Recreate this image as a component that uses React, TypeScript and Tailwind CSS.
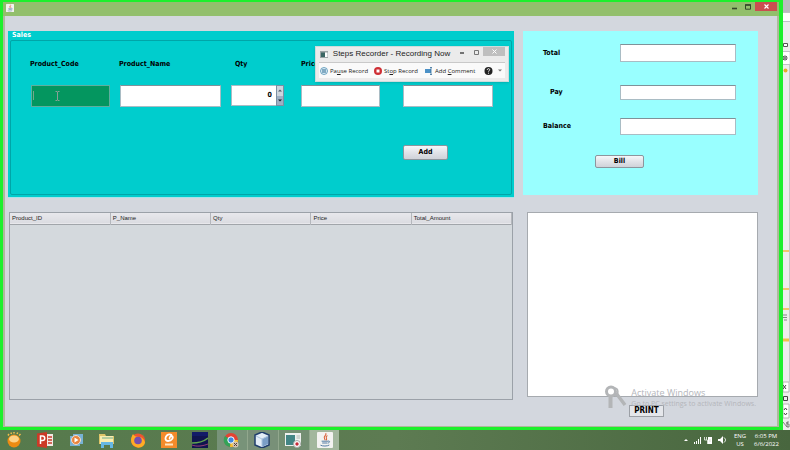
import type { ReactNode } from "react";
import { useState } from "react";

const swing = "font-['DejaVu_Sans_Condensed','DejaVu_Sans',sans-serif]";
const fieldBase = "block w-full border px-1 text-[8px] leading-none outline-none";
const field = `${fieldBase} border-[#a9bcc4] border-t-[#7f9299] bg-white`;
const swingButton =
  "rounded-[2px] border border-[#8d959d] bg-linear-to-b from-[#f6f7f9] via-[#e1e3e8] to-[#cfd2d9] text-[7px] leading-none font-bold text-black";

function JavaCup({ size }: { size: number }) {
  return (
    <svg width={size} height={size} viewBox="0 0 16 16" aria-hidden="true">
      <rect width="16" height="16" rx="1" fill="#f3f3f1" />
      <path d="M8.7 1.2c1.7 2-2.8 2.9-1.2 5.2.5.8.7 1.1.3 1.9M10.4 3.5c-2.3 1.3-1 2.3-.8 3.2.2.6-.2 1.2-.7 1.5" stroke="#d9633b" strokeWidth="1.1" fill="none" />
      <path d="M4.6 9.2h6.4M5.2 11h5.1M11 9.1c2.3-.6 2 1.7-.3 2M3.5 13.2c2 1.2 7 1.1 8.8-.2" stroke="#557da5" strokeWidth="1" fill="none" />
    </svg>
  );
}

function TitleBar() {
  return (
    <header className="flex h-[14px] items-start justify-between bg-[#92bf6c] pl-[3px] pr-[2px]">
      <div className="pt-[2px]">
        <JavaCup size={8} />
      </div>
      <div className="flex h-[9px]">
        <button aria-label="Minimize" className="flex w-[13px] items-center justify-center">
          <svg width="5" height="7" viewBox="0 0 5 7"><path d="M0 5.5h5" stroke="#33482a" strokeWidth="1.6" /></svg>
        </button>
        <button aria-label="Maximize" className="flex w-[14px] items-center justify-center">
          <svg width="6" height="6" viewBox="0 0 6 6"><path d="M.5.9h5v4.3h-5z" fill="none" stroke="#33482a" /><path d="M0 1h6" stroke="#33482a" strokeWidth="1.5" /></svg>
        </button>
        <button aria-label="Close" className="flex w-[22px] items-center justify-center bg-[#c94f50]">
          <svg width="5" height="5" viewBox="0 0 5 5"><path d="m.5.5 4 4m0-4-4 4" stroke="#fff" strokeWidth="1.1" /></svg>
        </button>
      </div>
    </header>
  );
}

function Entry({ id, label, children, inset }: { id: string; label: string; children: ReactNode; inset?: string }) {
  return (
    <div className="flex min-w-0 flex-col gap-[16px]">
      <label htmlFor={id} className={`h-[10px] text-[7px] leading-[10px] font-bold whitespace-nowrap ${inset ?? ""}`}>
        {label}
      </label>
      {children}
    </div>
  );
}

function SalesPanel() {
  const [qty, setQty] = useState(0);
  return (
    <section className="h-[167px] border-b border-[#a8e3e8] bg-[#00cdcd] px-[2px] pb-[2px]">
      <h1 className="h-[9px] pl-[2px] text-[7px] leading-[9px] font-bold text-white">Sales</h1>
      <div className="h-[155px] rounded-[2px] border border-[#00a5a8] pr-[18px] pl-[20px] pt-[18px]">
        <div className="grid grid-cols-[minmax(0,89fr)_minmax(0,111fr)_minmax(0,70fr)_minmax(0,102fr)_minmax(0,90fr)]">
          <Entry id="code" label="Product_Code" inset="-ml-px">
            <div className="relative mr-[10px]">
              <input id="code" className={`${fieldBase} h-[22px] border-[#5fae9e] bg-[#04965f]`} />
              <svg className="pointer-events-none absolute top-[6px] left-[2px]" width="30" height="11" viewBox="0 0 30 11" aria-hidden="true">
                <path d="M.5 0v9" stroke="#75a88b" />
                <path d="M22.500.5h1.500l.5.500.5-.500h1.500M24.500 1v8M22.500 9.500h1.500l.5-.500.5.500h1.500" stroke="#8a9f96" fill="none" />
              </svg>
            </div>
          </Entry>
          <Entry id="name" label="Product_Name" inset="-ml-px">
            <div className="mr-[10px]">
              <input id="name" className={`${field} h-[22px]`} />
            </div>
          </Entry>
          <Entry id="qty" label="Qty" inset="pl-[4px]">
            <div className="mr-[17px] flex h-[21px]">
              <input
                id="qty"
                value={qty}
                onChange={(e) => setQty(Number(e.target.value) || 0)}
                className="min-w-0 flex-1 border border-r-0 border-[#a9bcc4] bg-white pr-[4px] text-right text-[7px] font-bold outline-none"
              />
              <div className="flex w-[8px] flex-col border border-[#7a8fa4]">
                <button aria-label="Increase quantity" onClick={() => setQty(qty + 1)} className="flex flex-1 items-center justify-center bg-[#ccd4dd]">
                  <svg width="4" height="3" viewBox="0 0 4 3"><path d="m0 2.500 2-2 2 2z" fill="#4e5b68" /></svg>
                </button>
                <button aria-label="Decrease quantity" onClick={() => setQty(qty - 1)} className="flex flex-1 items-center justify-center bg-[#9eafc3]">
                  <svg width="4" height="3" viewBox="0 0 4 3"><path d="m0 .5 2 2 2-2z" fill="#14202c" /></svg>
                </button>
              </div>
            </div>
          </Entry>
          <Entry id="price" label="Price">
            <div className="mr-[23px]">
              <input id="price" className={`${field} h-[22px]`} />
            </div>
          </Entry>
          <Entry id="amount" label="">
            <input id="amount" aria-label="Amount" className={`${field} h-[22px]`} />
          </Entry>
          <div className="col-start-5 pt-[30px]">
            <button className={`${swingButton} h-[15px] w-[45px]`}>Add</button>
          </div>
        </div>
      </div>
    </section>
  );
}

function BillPanel() {
  return (
    <section className="h-[164px] bg-[#99ffff] pt-[13px] pr-[22px] pl-[20px] text-[7px] font-bold">
      <div className="flex h-[18px] items-center justify-between">
        <label htmlFor="total">Total</label>
        <div className="w-[60%]"><input id="total" className={`${field} h-[18px]`} /></div>
      </div>
      <div className="mt-[23px] flex h-[15px] items-center justify-between">
        <label htmlFor="pay" className="pl-[7px]">Pay</label>
        <div className="w-[60%]"><input id="pay" className={`${field} h-[15px]`} /></div>
      </div>
      <div className="mt-[18px] flex h-[17px] items-center justify-between">
        <label htmlFor="balance">Balance</label>
        <div className="w-[60%]"><input id="balance" className={`${field} h-[17px]`} /></div>
      </div>
      <div className="flex justify-center pt-[20px] pr-[40px]">
        <button className={`${swingButton} h-[13px] w-[49px]`}>Bill</button>
      </div>
    </section>
  );
}

function SalesTable() {
  const columns = ["Product_ID", "P_Name", "Qty", "Price", "Total_Amount"];
  return (
    <div className="mr-px ml-px flex-1 border border-[#9ba1a8] bg-[#d4d9dd]">
      <table className="w-full table-fixed border-collapse font-['Liberation_Sans',sans-serif]">
        <thead>
          <tr className="h-[11px] border-b border-[#a1a5aa] bg-linear-to-b from-[#e8e8ec] to-[#dbdce1]">
            {columns.map((c) => (
              <th key={c} scope="col" className="border-r border-[#b4b7bc] p-0 pl-[2px] text-left text-[6px] leading-[10px] font-normal text-[#222]">
                {c}
              </th>
            ))}
          </tr>
        </thead>
      </table>
    </div>
  );
}

function StepsRecorder() {
  return (
    <div className="absolute top-[46px] left-[315px] w-[194px] border border-[#cddcdc] bg-[#ebebeb] px-[3px] pb-[3px] font-['Open_Sans','Noto_Sans',sans-serif] text-[#222] shadow-sm">
      <div className="flex h-[15px] items-start">
        <svg className="mt-[4px] ml-px" width="8" height="7" viewBox="0 0 8 7" aria-hidden="true">
          <path d="M0 0h8v7H0z" fill="#9ba3a5" /><path d="M1 1.500h4v4.500H1z" fill="#3b6664" /><path d="M5 1.500h2.500V6H5z" fill="#fff" />
        </svg>
        <h2 className="flex-1 pt-px text-center font-['Liberation_Sans',sans-serif] text-[8px] leading-[12px] whitespace-nowrap">Steps Recorder - Recording Now</h2>
        <button aria-label="Minimize recorder" className="flex h-[10px] w-[14px] items-center justify-center">
          <svg width="4" height="4" viewBox="0 0 4 4"><path d="M0 3h4" stroke="#222" strokeWidth="1.200" /></svg>
        </button>
        <button aria-label="Maximize recorder" className="flex h-[10px] w-[14px] items-center justify-center">
          <svg width="5" height="5" viewBox="0 0 5 5"><path d="M.5.5h4v4h-4z" fill="none" stroke="#777" /></svg>
        </button>
        <button aria-label="Close recorder" className="flex h-[9px] w-[22px] items-center justify-center bg-[#bfbfbf]">
          <svg width="5" height="5" viewBox="0 0 5 5"><path d="m.5.5 4 4m0-4-4 4" stroke="#fff" /></svg>
        </button>
      </div>
      <div className="flex h-[16px] items-center border-t border-[#c9c9c9] bg-[#fafafa] pl-px text-[6px] leading-[8px] whitespace-nowrap">
        <button className="flex w-[54px] items-center gap-[2px]">
          <svg width="8" height="8" viewBox="0 0 8 8"><circle cx="4" cy="4" r="3.500" fill="#e3f1f8" stroke="#4c8eb1" strokeWidth=".8" /><path d="M3 2v4M5 2v4" stroke="#23658d" /></svg>
          <span>Pa<u>u</u>se Record</span>
        </button>
        <button className="flex w-[51px] items-center gap-[2px]">
          <svg width="8" height="8" viewBox="0 0 8 8"><circle cx="4" cy="4" r="4" fill="#cf2f35" /><path d="M2.500 2.500h3v3h-3z" fill="#fff" /></svg>
          <span>St<u>o</u>p Record</span>
        </button>
        <button className="flex w-[59px] items-center gap-[2px]">
          <svg width="8" height="8" viewBox="0 0 8 8"><path d="M0 2h6v4H0z" fill="#4b91c7" /><path d="M5 .5h2M6 .5v7M5 7.500h2" stroke="#386e99" strokeWidth=".8" /></svg>
          <span>Add <u>C</u>omment</span>
        </button>
        <button aria-label="Help" className="flex items-center gap-[5px]">
          <svg width="9" height="8" viewBox="0 0 9 8"><circle cx="4.500" cy="4" r="4" fill="#222" /><path d="M3.200 3c0-2 2.800-1.700 2.500 0-.1.600-1.200.8-1.200 1.700M4.500 5.700v1" stroke="#fff" strokeWidth=".9" fill="none" /></svg>
          <svg width="4" height="3" viewBox="0 0 4 3"><path d="M0 .5h4l-2 2z" fill="#777" /></svg>
        </button>
      </div>
    </div>
  );
}

function ActivationNotice() {
  return (
    <div className="pointer-events-none absolute right-[34px] bottom-[39px] flex gap-[4px] font-['Open_Sans','Noto_Sans',sans-serif] text-[#b4b6bb]">
      <svg className="mt-[-2px]" width="23" height="26" viewBox="0 0 23 26" aria-hidden="true">
        <g fill="none" stroke="#b3b5b7">
          <circle cx="7" cy="6.500" r="4.500" strokeWidth="3" />
          <path d="M6.500 11v12" strokeWidth="4" />
          <path d="m12 8 9 12" strokeWidth="3.500" />
          <path d="M10 3c5 0 5 6 1 8" strokeWidth="1.500" />
        </g>
      </svg>
      <div>
        <p className="text-[9px] leading-[12px]">Activate Windows</p>
        <p className="text-[7px] leading-[10px]">Go to PC settings to activate Windows.</p>
      </div>
    </div>
  );
}

function EditorEdge() {
  return (
    <aside className="flex w-[7px] flex-col bg-[#ededed]" aria-hidden="true">
      <svg className="min-h-0 flex-1" width="7" height="430" viewBox="0 0 7 430">
        <path d="M0 0h7v12H0z" fill="#babbc0" />
        <path d="M0 13h7v8H0z" fill="#fff" />
        <path d="M0 12.500h7M0 21.500h7M0 51.500h7M0 64.500h7" stroke="#bfc1c5" />
        <path d="M.5 43.500h4v3h-4z" fill="#fff" stroke="#555" />
        <path d="M0 52h6v12H0z" fill="#fff" />
        <circle cx="2" cy="58" r="2" fill="none" stroke="#555" /><path d="m0 56 4 4m0-4-4 4" stroke="#555" strokeWidth=".7" />
        <circle cx="2.500" cy="70.500" r="2" fill="#e4ac2c" />
        <path d="M6.500 65v317" stroke="#c6c6c6" />
        <path d="M0 251h6M0 289h6M0 309h6" stroke="#eebb45" strokeWidth="1.500" />
        <path d="M0 340h6" stroke="#eec24a" strokeWidth="3" />
        <path d="M0 315h4M0 317.500h4M1 320h3" stroke="#858585" />
        <path d="M0 382h6v10H0zM0 404h6v14H0z" fill="#fff" stroke="#b4b4b4" />
        <path d="m0 385 3 4m0-4-3 4M.5 396.500h4v4h-4zM1 410l1.500-2 1.500 2M1 413l1.500 2 1.500-2" stroke="#444" fill="none" />
        <path d="M0 422l4 5V422M6 422H4v2h2v3H4" stroke="#666" strokeWidth=".8" fill="none" />
      </svg>
    </aside>
  );
}

const apps: { name: string; open?: string; art: ReactNode }[] = [
  { name: "Start", art: <><circle cx="8" cy="9" r="6.500" fill="#ed8b12" /><ellipse cx="8" cy="7" rx="5" ry="3.500" fill="#ffd286" /><path d="M2 3.500 3 2M5 2l.5-1.500M8 1.500V0M11 2l.7-1.500M13 3.500 14.500 2" stroke="#f2bd4c" strokeWidth="1.500" /></> },
  { name: "PowerPoint", art: <><path d="M7 2h9v12H7z" fill="#f4e9e4" /><path d="M11 5h4M11 8h4M11 11h4" stroke="#c63c2c" strokeWidth="1.500" /><path d="M0 1.500 10 0v16L0 14.500z" fill="#cc3a27" /><path d="M3.500 12V4h2c3 0 3 4.500 0 4.500h-2" stroke="#fff" strokeWidth="1.500" fill="none" /></> },
  { name: "Media Player", art: <><path d="M5 2h10v10H5zM2 4h10v10H2z" fill="#77b2d4" /><circle cx="8" cy="8" r="4.500" fill="#e9843d" stroke="#f3ddcb" /><path d="m6.500 5.500 4 2.500-4 2.500z" fill="#fff" /></> },
  { name: "Explorer", art: <><path d="M0 2h6l1 2h8v8H0z" fill="#dfc568" /><path d="M1 4h13v8H1z" fill="#faedb0" /><path d="M2 10h12v6H11v-3H5v3H2z" fill="#66b7e4" /><path d="M3 6h11" stroke="#72ae8c" /></> },
  { name: "Firefox", art: <><circle cx="8" cy="8.500" r="7" fill="#ef552f" /><path d="M10 0c4 3 6 6 5 10-1-3-3-5-6-5-3 0-5-1-6-3-3 5-3 11 3 13 4 2 9-1 9-5 1-5-2-8-5-10z" fill="#ffac24" /><circle cx="8" cy="8.500" r="3.800" fill="#7550ae" /></> },
  { name: "PDF", art: <><path d="M0 0h16v16H0z" fill="#f38b2b" /><path d="M11 3C5 0 2 9 7 9c4 0 6-4 4-5-2 0-3 2-2 3" stroke="#fff" strokeWidth="1.800" fill="none" /><path d="M4 12.500h8" stroke="#ffe4be" strokeWidth="2" /></> },
  { name: "Studio", art: <><path d="M0 0h16v16H0z" fill="#10154f" /><path d="M0 11c5 0 11-1 16-5" stroke="#61a34f" strokeWidth="1.500" fill="none" /><path d="M0 13c5 2 11 1 16-1" stroke="#973e75" fill="none" /><path d="M0 0h16v4H0z" fill="#121b67" /></> },
  { name: "Chrome", open: "bg-[#789379]", art: <><circle cx="8" cy="8" r="7" fill="#e44334" /><path d="M8 8 2 4a7 7 0 0 0 5 11z" fill="#33a358" /><path d="M8 8h7a7 7 0 0 1-8 7z" fill="#f6c52f" /><circle cx="8" cy="8" r="3.200" fill="#4087df" stroke="#fff" /><circle cx="12.500" cy="12.500" r="3" fill="#d4c5b4" /><path d="m11 11 3 3m0-3-3 3" stroke="#554139" /></> },
  { name: "NetBeans", open: "bg-[#789078]", art: <><path d="m8 0 7 3v10l-7 3-7-3V3z" fill="#e3edf7" stroke="#1f3e6c" strokeWidth="1.500" /><path d="M8 7v8l6-3V4z" fill="#7a9ec6" /><path d="m2 4 6 3 6-3M8 7v8" stroke="#aac3de" fill="none" /></> },
  { name: "Recorder", open: "bg-[#738e72]", art: <><path d="M0 1h16v13H0z" fill="#edf0ee" /><path d="M1 3h9v10H1z" fill="#438585" /><path d="M11.500 4H15M11.500 6H15" stroke="#afb5b3" /><circle cx="12" cy="12" r="3.500" fill="#fff" stroke="#a6aaa8" /><circle cx="12" cy="12" r="1.700" fill="#c52938" /></> },
];

function Taskbar() {
  return (
    <footer className="flex h-[20px] items-stretch justify-between bg-linear-to-r from-[#567a4c] via-[#5d7b52] to-[#48663e]">
      <nav aria-label="Applications" className="flex">
        {apps.map((app) => (
          <button key={app.name} aria-label={app.name} className={`flex w-[31px] items-center justify-center border-r pr-[2px] ${app.open ? `${app.open} border-[#91a78d]` : "border-transparent"}`}>
            <svg width="16" height="16" viewBox="0 0 16 16">{app.art}</svg>
          </button>
        ))}
        <button aria-label="Java" className="flex w-[29px] items-center justify-center bg-[#a2b79d]">
          <JavaCup size={16} />
        </button>
      </nav>
      <div className="flex items-center pr-[12px] font-['Open_Sans','Noto_Sans',sans-serif] text-[6px] leading-[8px] text-white">
        <svg width="42" height="10" viewBox="0 0 42 10" aria-label="Tray">
          <path d="m0 6 2-2 2 2z" fill="#fff" />
          <path d="M10.500 9V7M12.500 9V6M14.500 9V4M16.500 9V2" stroke="#fff" />
          <path d="M24 2h4v7h-4z" fill="#fff" /><path d="M22.500 2v3M20.500 2v3h3v4M26 4v3" stroke="#d4ddd1" fill="none" />
          <path d="M34 4h2l3-3v8L36 6h-2z" fill="#fff" /><path d="M40 2.500c2 2 2 3 0 5" stroke="#fff" fill="none" />
        </svg>
        <div className="w-[28px] text-center"><p>ENG</p><p>US</p></div>
        <time className="block w-[24px] text-center whitespace-nowrap"><span className="block">6:05 PM</span><span className="block">6/6/2022</span></time>
      </div>
    </footer>
  );
}

export default function App() {
  return (
    <div className={`relative flex min-h-screen flex-col ${swing}`}>
      <div className="flex flex-1">
        <div className="flex flex-1 flex-col border-t-2 border-r-4 border-b-[3px] border-l-[3px] border-[#1cf02c]">
          <TitleBar />
          <main className="flex flex-1 border-x-2 border-b border-[#aeb99b] bg-[#d3d7de] pt-[15px] pr-[19px] pl-[3px]">
            <div className="flex flex-[506] flex-col gap-[14px] pb-[26px]">
              <SalesPanel />
              <SalesTable />
            </div>
            <div className="ml-[9px] flex flex-[235] flex-col">
              <BillPanel />
              <textarea aria-label="Receipt" className="mt-[17px] ml-[4px] flex-1 resize-none border border-[#a6aaaf] bg-white outline-none" />
              <div className="flex justify-center pt-[8px] pb-[9px] pl-[12px]">
                <button className="h-[12px] w-[35px] border border-[#9ca0a6] bg-[#e5e7eb] text-[8px] leading-none font-bold">PRINT</button>
              </div>
            </div>
          </main>
        </div>
        <EditorEdge />
      </div>
      <Taskbar />
      <StepsRecorder />
      <ActivationNotice />
    </div>
  );
}
